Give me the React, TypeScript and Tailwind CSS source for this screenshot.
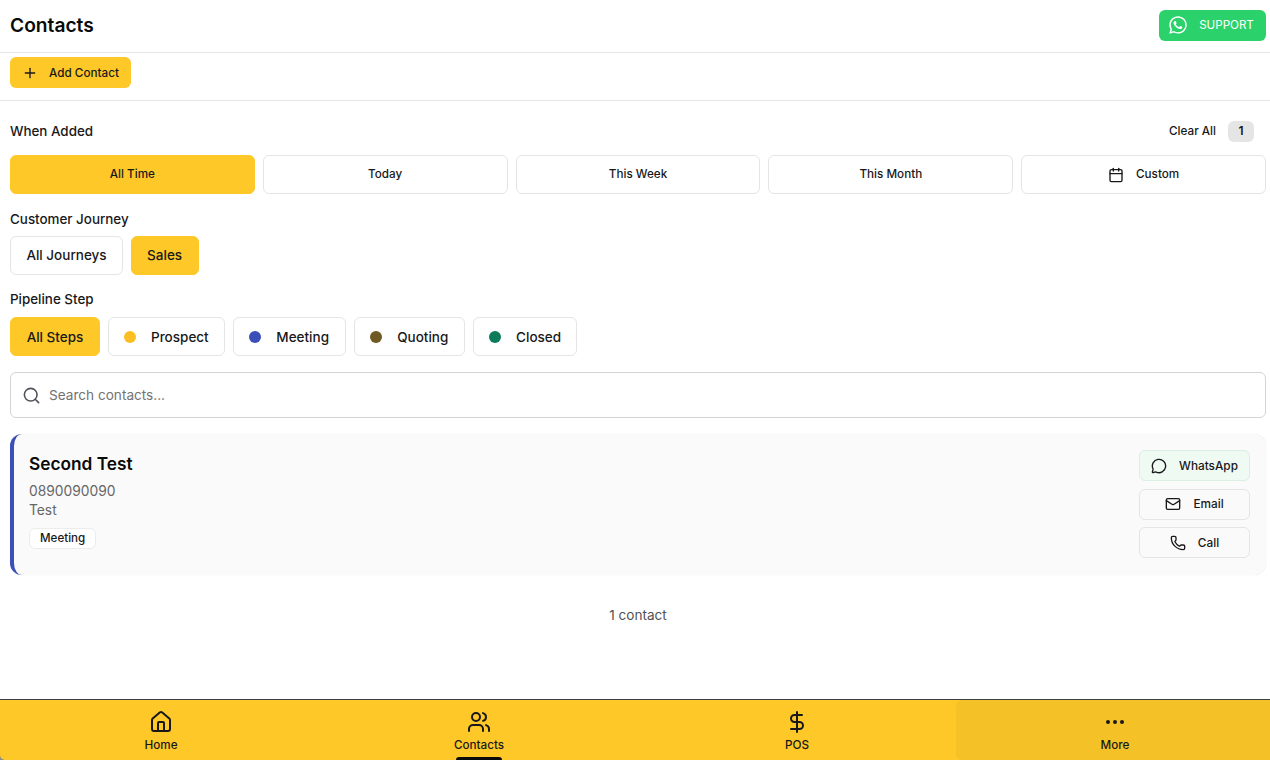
import { Calendar, DollarSign, Ellipsis, House, Mail, MessageCircle, Phone, Plus, Search, Users } from "lucide-react";
import { FaWhatsapp } from "react-icons/fa";

const pill = "h-[39px] flex items-center justify-center rounded-md border font-medium text-[#18181b]";
const idle = "border-[#e5e5e5] bg-white";
const active = "border-[#fec828] bg-[#fec828]";

const dates = ["Today", "This Week", "This Month"];
const steps = [
  { name: "Prospect", dot: "bg-[#fbbf24]", w: "w-[117px]" },
  { name: "Meeting", dot: "bg-[#3b4fb8]", w: "w-[113px]" },
  { name: "Quoting", dot: "bg-[#705a24]", w: "w-[111.5px]" },
  { name: "Closed", dot: "bg-[#0e7c5a]", w: "w-[104.5px]" },
];

const ActionButton = ({ icon, label, green }: { icon: React.ReactNode; label: string; green?: boolean }) => (
  <button className={`h-[31px] w-[111px] flex items-center justify-center gap-[12px] rounded-md border text-[11.8px] font-medium text-[#18181b] ${green ? "border-[#dcefe3] bg-[#effaf3]" : "border-[#e5e5e5] bg-[#fafafa]"}`}>
    {icon}
    <span className="pt-[2px]">{label}</span>
  </button>
);

export default function App() {
  return (
    <div className="h-[760px] w-[1270px] flex flex-col overflow-hidden bg-white font-['Inter',sans-serif] text-[#18181b]">
      <header className="h-[53px] flex items-center justify-between border-b border-[#e5e5e5] pb-[2px] pl-[10px] pr-[4px]">
        <h1 className="text-[19.2px] font-semibold text-[#0a0a0a]">Contacts</h1>
        <button className="h-[31px] w-[107px] flex items-center justify-center gap-[11px] rounded-md bg-[#2bd26b] pr-[3px] text-[11.6px] font-normal text-white">
          <FaWhatsapp className="h-[20px] w-[20px]" />
          <span className="pt-[2px]">SUPPORT</span>
        </button>
      </header>

      <div className="h-[48px] border-b border-[#e5e5e5] pl-[10px] pt-[4px]">
        <button className="h-[31px] w-[121px] flex items-center justify-center gap-[11px] rounded-md bg-[#fec828] text-[11.7px] font-medium text-[#18181b]">
          <Plus className="h-[16px] w-[16px]" />
          <span className="pt-[2px]">Add Contact</span>
        </button>
      </div>

      <main className="flex-1 px-[10px] pt-[18px] pr-[4px]">
        <div className="h-[24px] flex items-center justify-between pr-[12px]">
          <span className="text-[13.4px] font-medium">When Added</span>
          <div className="flex items-center gap-[12px]">
            <span className="pt-[2px] text-[11.7px] font-medium">Clear All</span>
            <span className="h-[21px] w-[26px] flex items-center justify-center rounded-md bg-[#e5e5e5] text-[12px] font-semibold">1</span>
          </div>
        </div>

        <div className="mt-[12px] grid grid-cols-5 gap-[8px]">
          <button className={`${pill} ${active} text-[11.7px]`}>All Time</button>
          {dates.map((d) => (
            <button key={d} className={`${pill} ${idle} text-[11.7px]`}>{d}</button>
          ))}
          <button className={`${pill} ${idle} gap-[12px] text-[11.7px]`}>
            <Calendar className="h-[16px] w-[16px]" />
            Custom
          </button>
        </div>

        <div className="mt-[15px] text-[13.4px] font-medium leading-[20px]">Customer Journey</div>
        <div className="mt-[7px] flex gap-[7.6px]">
          <button className={`${pill} ${idle} w-[113px] text-[13.5px]`}>All Journeys</button>
          <button className={`${pill} ${active} w-[68px] text-[13.5px]`}>Sales</button>
        </div>

        <div className="mt-[14px] text-[13.4px] font-medium leading-[20px]">Pipeline Step</div>
        <div className="mt-[8px] flex gap-[7.85px]">
          <button className={`${pill} ${active} w-[90px] pt-[1px] text-[13.5px]`}>All Steps</button>
          {steps.map((s) => (
            <button key={s.name} className={`${pill} ${idle} ${s.w} gap-[15px] pt-[1px] text-[13.5px]`}>
              <span className={`h-[12px] w-[12px] rounded-full ${s.dot}`} />
              {s.name}
            </button>
          ))}
        </div>

        <div className="mt-[16px] h-[46px] flex items-center gap-[8px] rounded-md border border-[#d4d4d4] pl-[11px]">
          <Search className="h-[19px] w-[19px] text-[#52525b]" />
          <input className="flex-1 bg-transparent text-[13.6px] outline-none placeholder:text-[#737373]" placeholder="Search contacts..." />
        </div>

        <article className="mt-[16px] h-[141px] flex justify-between rounded-xl border-l-[4px] border-[#3b4fb8] bg-[#fafafa] pl-[15px] pr-[16px] shadow-[0_0_1px_rgba(0,0,0,0.15)]">
          <div className="pt-[18px]">
            <h2 className="text-[17.3px] font-semibold leading-[24px] text-[#0a0a0a]">Second Test</h2>
            <p className="mt-[6px] text-[13.8px] leading-[19px] text-[#666666]">0890090090</p>
            <p className="text-[13.8px] leading-[19px] text-[#666666]">Test</p>
            <span className="mt-[8px] inline-flex h-[21px] items-center rounded-md border border-[#ececec] bg-white px-[10px] text-[11.6px] font-medium">Meeting</span>
          </div>
          <div className="flex flex-col gap-[7.6px] pt-[16px]">
            <ActionButton green label="WhatsApp" icon={<MessageCircle className="h-[16px] w-[16px]" />} />
            <ActionButton label="Email" icon={<Mail className="h-[16px] w-[16px]" />} />
            <ActionButton label="Call" icon={<Phone className="h-[16px] w-[16px]" />} />
          </div>
        </article>

        <p className="mt-[30px] text-center text-[13.6px] leading-[20px] text-[#525252]">1 contact</p>
      </main>

      <div className="bg-[#8a8a8a]">
        <nav className="relative h-[61px] grid grid-cols-[repeat(4,318px)] rounded-bl-[5px] border-t border-[#404040] bg-[#fec828] pl-[2px] text-[11.7px] font-medium text-[#18181b]">
          <a className="flex flex-col items-center pt-[10px]">
            <House className="h-[24px] w-[24px]" />
            <span className="mt-[3px]">Home</span>
          </a>
          <a className="relative flex flex-col items-center pt-[10px]">
            <Users className="h-[24px] w-[24px]" />
            <span className="mt-[3px]">Contacts</span>
            <span className="absolute bottom-0 h-[3px] w-[46px] rounded-t-md bg-[#0a0a0a]" />
          </a>
          <a className="flex flex-col items-center pt-[10px]">
            <DollarSign className="h-[24px] w-[24px]" />
            <span className="mt-[3px]">POS</span>
          </a>
          <a className="flex flex-col items-center rounded-md bg-[#f4c227] pt-[10px]">
            <Ellipsis className="h-[24px] w-[24px]" />
            <span className="mt-[3px]">More</span>
          </a>
        </nav>
      </div>
    </div>
  );
}
